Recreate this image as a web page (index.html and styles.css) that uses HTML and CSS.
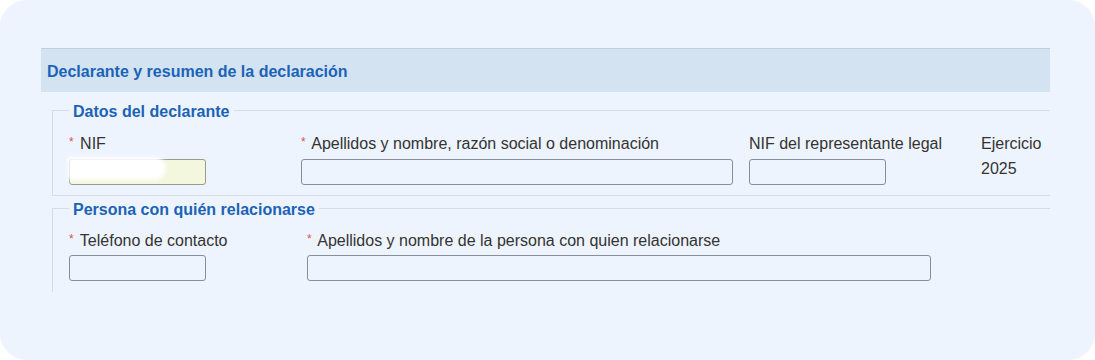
FILE: index.html
```html
<!DOCTYPE html>
<html lang="es">
<head>
	<meta charset="UTF-8">
	<meta name="viewport" content="width=device-width, initial-scale=1.0">
	<title>Declarante y resumen de la declaración</title>
	<link rel="stylesheet" href="styles.css">
</head>
<body>
	<div class="card">
		<div class="panel">
			<!-- cabecera -->
			<div class="panel_head">Declarante y resumen de la declaración</div>

			<!-- datos del declarante -->
			<fieldset class="group">
				<legend>Datos del declarante</legend>
				<div class="row">
					<div class="field field_nif">
						<label><span class="req">*</span> NIF</label>
						<div class="input input_filled"><span class="blur"></span></div>
					</div>
					<div class="field field_name">
						<label><span class="req">*</span> Apellidos y nombre, razón social o denominación</label>
						<div class="input"></div>
					</div>
					<div class="field field_rep">
						<label>NIF del representante legal</label>
						<div class="input"></div>
					</div>
					<div class="field field_year">
						<label>Ejercicio</label>
						<div class="value">2025</div>
					</div>
				</div>
			</fieldset>

			<!-- persona de contacto -->
			<fieldset class="group group_last">
				<legend>Persona con quién relacionarse</legend>
				<div class="row">
					<div class="field field_tel">
						<label><span class="req">*</span> Teléfono de contacto</label>
						<div class="input"></div>
					</div>
					<div class="field field_contact">
						<label><span class="req">*</span> Apellidos y nombre de la persona con quien relacionarse</label>
						<div class="input"></div>
					</div>
				</div>
			</fieldset>
		</div>
	</div>
</body>
</html>
```

FILE: styles.css
```css
* {
	padding: 0;
	margin: 0;
	box-sizing: border-box;
}
body {
	background-color: #fff;
	font-family: "Liberation Sans", Arial, sans-serif;
	font-size: 16px;
	color: #333;
}
/*tarjeta exterior*/
.card {
	height: 360px;
	border-radius: 28px;
	background-color: #eef4fd;
	box-shadow: 0 0 2px rgba(0, 0, 0, .08);
	padding: 48px 45px 0 41px;
	overflow: hidden;
}
.panel {
	overflow: hidden;
}
/*cabecera azul*/
.panel_head {
	height: 44px;
	border-top: 1px solid #c5ccd6;
	background-color: #d3e3f2;
	color: #1b63b6;
	font-weight: bold;
	padding-left: 6px;
	line-height: 45px;
}
/*grupos*/
.group {
	border: 1px solid #d6dce4;
	border-right: none;
	margin: 7px -20px 0 11px;
	padding: 14px 16px 10px;
}
.group_last {
	margin-top: 1px;
	border-bottom: none;
	padding-top: 13px;
	padding-bottom: 11px;
}
.group_last .input {
	margin-top: 5px;
}
.group legend {
	color: #1b63b6;
	font-weight: bold;
	padding: 4px 4px 0;
	line-height: 18px;
}
.row {
	display: flex;
}
.field label {
	display: block;
	height: 18px;
	line-height: 18px;
	white-space: nowrap;
}
.req {
	color: #d9534f;
	font-size: 12px;
	line-height: 0;
	vertical-align: 3px;
	margin-right: 2px;
}
.input {
	height: 26px;
	margin-top: 6px;
	border: 1px solid #8a8f96;
	border-radius: 3px;
	background-color: #eef4fd;
	position: relative;
}
.input_filled {
	background-color: #f2f7dd;
	border-color: #9a9c90;
}
/*zona tapada*/
.blur {
	position: absolute;
	left: -2px;
	top: -3px;
	width: 98px;
	height: 23px;
	background-color: #fff;
	border-radius: 0 12px 12px 0;
	filter: blur(2px);
}
.value {
	margin-top: 6px;
	line-height: 20px;
}
.field_nif { width: 137px; margin-right: 95px; }
.field_name { width: 432px; margin-right: 16px; }
.field_rep { width: 137px; margin-right: 95px; }
.field_tel { width: 137px; margin-right: 101px; }
.field_contact { width: 624px; }
```
